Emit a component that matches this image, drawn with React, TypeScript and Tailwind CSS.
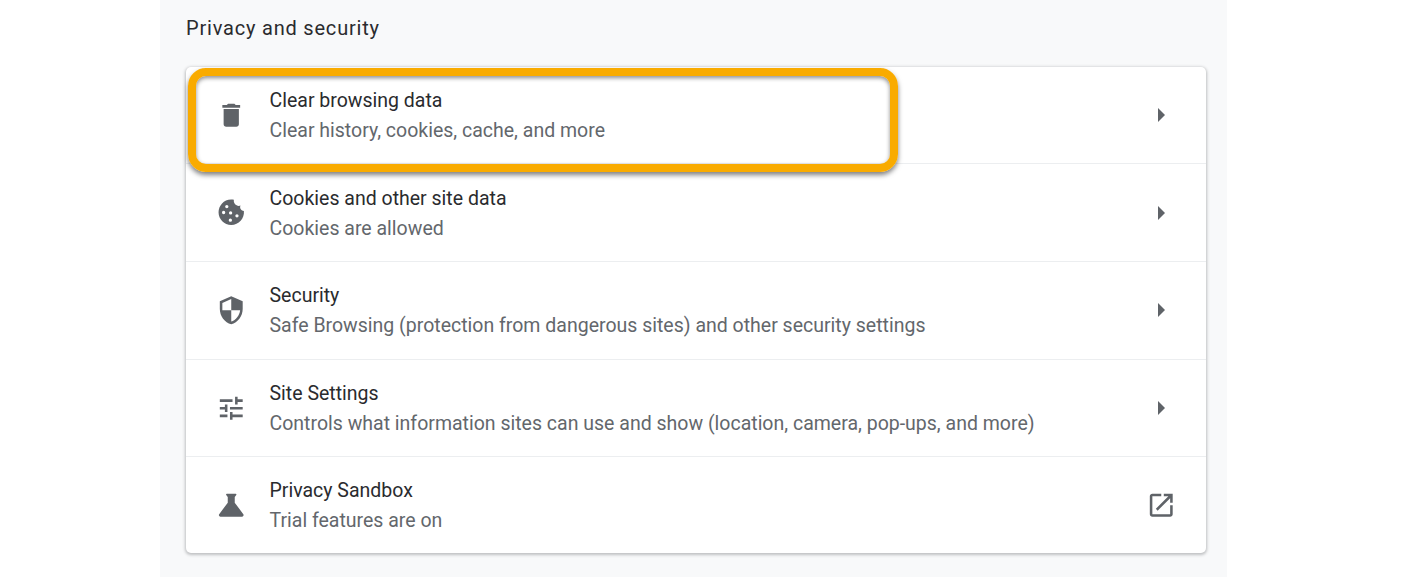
const paths: Record<string, string> = {
	trash: "M6 19c0 1.1.9 2 2 2h8c1.1 0 2-.9 2-2V7H6v12zM19 4h-3.5l-1-1h-5l-1 1H5v2h14V4z",
	shield: "M12 1L3 5v6c0 5.55 3.84 10.74 9 12 5.16-1.26 9-6.45 9-12V5l-9-4zm0 10.99h7c-.53 4.12-3.28 7.79-7 8.94V12H5V6.3l7-3.11v8.8z",
	tune: "M3 17v2h6v-2H3zM3 5v2h10V5H3zm10 16v-2h8v-2h-8v-2h-2v6h2zM7 9v2H3v2h4v2h2V9H7zm14 4v-2H11v2h10zm-6-4h2V7h4V5h-4V3h-2v6z",
	flask: "M21.5 19L14.75 10V5.5l1.2-1.6c.32-.3.04-.9-.49-.9H8.54c-.53 0-.81.6-.49.9l1.2 1.6V10L2.5 19c-.61.83-.03 2 1 2h17c1.03 0 1.61-1.17 1-2z",
	cookie: "M21.95 10.99c-1.79-.03-3.7-1.95-2.68-4.22-2.97 1-5.78-1.59-5.19-4.56C7.11.74 2 6.41 2 12c0 5.52 4.48 10 10 10 5.89 0 10.54-5.08 9.95-11.01zM8.5 6.2a1.3 1.3 0 1 1 0 2.6 1.3 1.3 0 0 1 0-2.6zM6 10.9a1.3 1.3 0 1 1 0 2.6 1.3 1.3 0 0 1 0-2.6zM11.5 11.2a1.3 1.3 0 1 1 0 2.6 1.3 1.3 0 0 1 0-2.6zM11.3 16.9a1.3 1.3 0 1 1 0 2.6 1.3 1.3 0 0 1 0-2.6zM16.5 13.5a1.3 1.3 0 1 1 0 2.6 1.3 1.3 0 0 1 0-2.6z",
	open: "M19 19H5V5h7V3H5c-1.11 0-2 .9-2 2v14c0 1.1.89 2 2 2h14c1.1 0 2-.9 2-2v-7h-2v7zM14 3v2h3.59l-9.83 9.83 1.41 1.41L19 6.41V10h2V3h-7z",
};

function Icon({ name }: { name: string }) {
	return (
		<svg viewBox="0 0 24 24" className="h-[30.5px] w-[30.5px] fill-[#5f6368]">
			<path d={paths[name]} fillRule="evenodd" />
		</svg>
	);
}

function Arrow() {
	return (
		<svg viewBox="0 0 7 14" className="h-[14px] w-[7px] fill-[#5f6368]">
			<path d="M0 0l7 7-7 7z" />
		</svg>
	);
}

const rows = [
	{ icon: "trash", title: "Clear browsing data", sub: "Clear history, cookies, cache, and more", h: "h-[96.4px]" },
	{ icon: "cookie", title: "Cookies and other site data", sub: "Cookies are allowed", h: "h-[97.6px]" },
	{ icon: "shield", title: "Security", sub: "Safe Browsing (protection from dangerous sites) and other security settings", h: "h-[97.6px]" },
	{ icon: "tune", title: "Site Settings", sub: "Controls what information sites can use and show (location, camera, pop-ups, and more)", h: "h-[97.6px]" },
	{ icon: "flask", title: "Privacy Sandbox", sub: "Trial features are on", external: true, h: "h-[96.8px]" },
];

export default function App() {
	return (
		<div className="h-[577px] overflow-hidden bg-white font-['Roboto',sans-serif]">
			<main className="ml-[160px] h-full w-[1067px] bg-[#f8f9fa] pl-[26px] pr-[21px]">
				<h2 className="pt-[14px] text-[20px] leading-[28px] tracking-[0.8px] text-[#2a2b2e]">Privacy and security</h2>

				<section className="relative mt-[25px] rounded-[5px] bg-white shadow-[0_1px_3px_1px_rgba(60,64,67,0.3)]">
					{rows.map((row, i) => (
						<div
							key={row.title}
							className={`flex ${row.h} items-center pl-[29.75px] ${i > 0 ? "border-t border-[#eceef0]" : ""}`}
						>
							<Icon name={row.icon} />
							<div className="ml-[23.25px] flex-1 pt-[2px]">
								<div className="text-[19.5px] leading-[30px] text-[#2a2b2e]">{row.title}</div>
								<div className="text-[19.5px] leading-[30px] text-[#63676c]">{row.sub}</div>
							</div>
							{row.external ? (
								<div className="mr-[29.5px] flex">
									<Icon name="open" />
								</div>
							) : (
								<div className="mr-[41px] flex">
									<Arrow />
								</div>
							)}
						</div>
					))}

					<div className="absolute left-[2px] top-[1px] h-[104px] w-[710px] rounded-[18px] border-[8px] border-[#f9ab00] shadow-[0_3px_5px_rgba(0,0,0,0.5),inset_0_2px_4px_rgba(0,0,0,0.45)]" />
				</section>
			</main>
		</div>
	);
}
